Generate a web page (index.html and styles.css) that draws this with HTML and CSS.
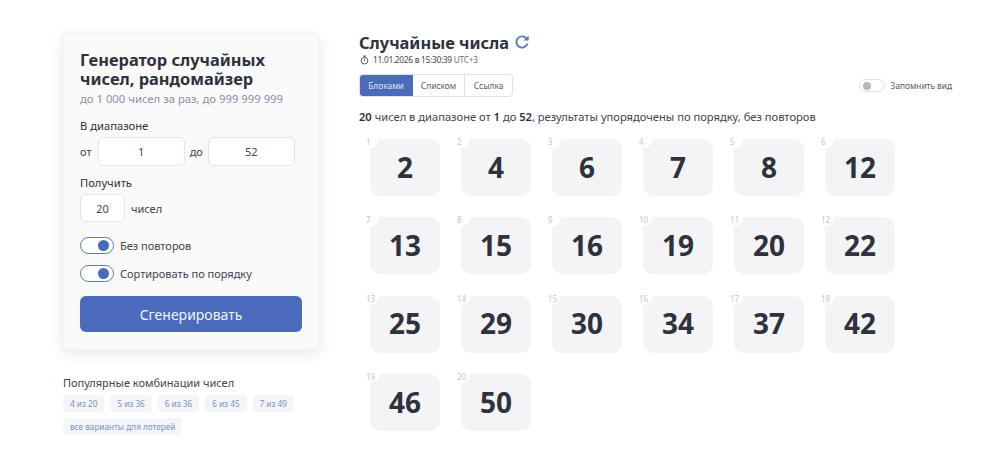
FILE: index.html
```html
<!DOCTYPE html>
<html lang="ru">
<head>
<meta charset="utf-8">
<title>Генератор случайных чисел</title>
<link rel="stylesheet" href="styles.css">
</head>
<body>
<div class="page">
  <aside class="side">
    <form class="card">
      <h1 class="card-title">Генератор случайных чисел, рандомайзер</h1>
      <p class="card-sub">до 1 000 чисел за раз, до 999 999 999</p>
      <div class="label label-range">В диапазоне</div>
      <div class="range-row">
        <span>от</span><div class="field field-wide">1</div>
        <span class="to">до</span><div class="field field-wide">52</div>
      </div>
      <div class="label label-get">Получить</div>
      <div class="get-row"><div class="field field-small">20</div><span>чисел</span></div>
      <div class="switch-row switch-first"><span class="switch"><i></i></span><span>Без повторов</span></div>
      <div class="switch-row"><span class="switch"><i></i></span><span>Сортировать по порядку</span></div>
      <div class="submit">Сгенерировать</div>
    </form>
    <div class="popular">
      <div class="popular-title">Популярные комбинации чисел</div>
      <div class="tags">
        <span class="tag">4 из 20</span><span class="tag">5 из 36</span><span class="tag">6 из 36</span><span class="tag">6 из 45</span><span class="tag">7 из 49</span><span class="tag">все варианты для лотерей</span>
      </div>
    </div>
  </aside>
  <main class="main">
    <div class="head"><h2 class="main-title">Случайные числа</h2>
      <svg class="refresh" viewBox="0 0 14 14" width="14" height="14"><path d="M11.2 3.2A5.6 5.6 0 1 0 12.4 8.6" fill="none" stroke="#5877c5" stroke-width="1.9"/><path d="M13.6 0.4V5.6H8.4Z" fill="#5877c5"/></svg>
    </div>
    <div class="date">
      <svg class="watch" viewBox="0 0 10 10" width="9" height="10"><circle cx="5" cy="5.8" r="3.7" fill="none" stroke="#3f444e" stroke-width="1"/><path d="M3.4 .6H6.6M5 .6V2M5 3.8V5.9" stroke="#3f444e" stroke-width="1" fill="none"/></svg>
      <span>11.01.2026 в 15:30:39 <span class="tz">UTC+3</span></span>
    </div>
    <div class="toolbar">
      <div class="tabs"><span class="tab tab-on tab-1">Блоками</span><span class="tab tab-2">Списком</span><span class="tab tab-3">Ссылка</span></div>
      <div class="remember"><span class="switch-off"><i></i></span><span>Запомнить вид</span></div>
    </div>
    <p class="summary"><b>20</b> чисел в диапазоне от <b>1</b> до <b>52</b>, результаты упорядочены по порядку, без повторов</p>
    <div class="grid">
      <div class="cell"><span class="idx">1</span><div class="tile">2</div></div>
      <div class="cell"><span class="idx">2</span><div class="tile">4</div></div>
      <div class="cell"><span class="idx">3</span><div class="tile">6</div></div>
      <div class="cell"><span class="idx">4</span><div class="tile">7</div></div>
      <div class="cell"><span class="idx">5</span><div class="tile">8</div></div>
      <div class="cell"><span class="idx">6</span><div class="tile">12</div></div>
      <div class="cell"><span class="idx">7</span><div class="tile">13</div></div>
      <div class="cell"><span class="idx">8</span><div class="tile">15</div></div>
      <div class="cell"><span class="idx">9</span><div class="tile">16</div></div>
      <div class="cell"><span class="idx">10</span><div class="tile">19</div></div>
      <div class="cell"><span class="idx">11</span><div class="tile">20</div></div>
      <div class="cell"><span class="idx">12</span><div class="tile">22</div></div>
      <div class="cell"><span class="idx">13</span><div class="tile">25</div></div>
      <div class="cell"><span class="idx">14</span><div class="tile">29</div></div>
      <div class="cell"><span class="idx">15</span><div class="tile">30</div></div>
      <div class="cell"><span class="idx">16</span><div class="tile">34</div></div>
      <div class="cell"><span class="idx">17</span><div class="tile">37</div></div>
      <div class="cell"><span class="idx">18</span><div class="tile">42</div></div>
      <div class="cell"><span class="idx">19</span><div class="tile">46</div></div>
      <div class="cell"><span class="idx">20</span><div class="tile">50</div></div>
    </div>
  </main>
</div>
</body>
</html>
```
FILE: styles.css
```css
* { box-sizing: border-box; }
html, body { margin: 0; height: 452px; overflow: hidden; background: #fff; }
body { font-family: "Noto Sans", "Open Sans", sans-serif; color: #2d323c; }
.page { display: flex; padding: 33px 48px 0 62px; gap: 39px; }
.side { width: 258px; flex: none; }
.card { height: 317px; padding: 16px 17px 0; background: #fafafb; border: 1px solid #f0f0f3; border-radius: 6px; box-shadow: 0 4px 14px rgba(40, 50, 80, .1); }
.card-title { margin: 0; font-size: 16.4px; line-height: 19px; font-weight: 700; color: #2d323c; }
.card-sub { margin: 3px 0 0; font-size: 11.3px; line-height: 16px; color: #8b90a5; }
.label { font-size: 11.2px; line-height: 16px; color: #2d323c; }
.label-range { margin-top: 11px; }
.label-get { margin-top: 9px; }
.range-row { display: flex; align-items: center; margin-top: 3px; font-size: 11px; color: #3f444e; }
.range-row span { width: 18px; flex: none; }
.range-row .to { width: 23.5px; text-align: center; }
.field { height: 29px; display: flex; align-items: center; justify-content: center; background: #fff; border: 1px solid #e4e5ea; border-radius: 5px; font-size: 11px; color: #3f444e; }
.field-wide { width: 86.5px; }
.field-small { width: 45px; height: 28px; }
.get-row { display: flex; align-items: center; gap: 6px; margin-top: 3px; font-size: 11px; color: #3f444e; }
.switch-row { display: flex; align-items: center; gap: 6px; margin-top: 11px; font-size: 11px; line-height: 17px; color: #3f444e; }
.switch-first { margin-top: 15px; }
.switch { width: 34px; height: 17px; display: flex; align-items: center; justify-content: flex-end; padding-right: 4px; border: 1px solid #5877c5; border-radius: 9px; background: #fff; }
.switch i { width: 11px; height: 11px; border-radius: 50%; background: #4a6abc; }
.submit { height: 36px; margin-top: 14px; display: flex; align-items: center; justify-content: center; background: #4a6abc; border-radius: 6px; color: #f2f4fb; font-size: 14px; }
.popular { margin-top: 26px; padding-left: 1px; }
.popular-title { font-size: 11px; line-height: 14px; color: #3f444e; }
.tags { display: flex; flex-wrap: wrap; gap: 6px; margin-top: 5px; }
.tag { height: 17px; padding: 0 7px; display: flex; align-items: center; background: #f4f5f8; border-radius: 4px; font-size: 8.2px; color: #7a90cf; }
.main { flex: 1; min-width: 0; }
.head { display: flex; align-items: flex-start; gap: 6px; }
.main-title { margin: 0; font-size: 16.4px; line-height: 20px; font-weight: 700; color: #2d323c; }
.refresh { margin-top: 2px; }
.date { display: flex; align-items: center; gap: 4px; margin-top: 1px; font-size: 8.4px; letter-spacing: -.3px; line-height: 12px; color: #3f444e; padding-left: 1px; }
.tz { color: #6c7080; }
.toolbar { display: flex; justify-content: space-between; align-items: center; margin-top: 8px; }
.tabs { display: flex; height: 23px; border: 1px solid #dfe1e7; border-radius: 4px; overflow: hidden; font-size: 8.4px; color: #555a66; }
.tab { display: flex; align-items: center; justify-content: center; border-right: 1px solid #dfe1e7; }
.tab-1 { width: 54px; margin: -1px 0 -1px -1px; }
.tab-2 { width: 52px; }
.tab-3 { width: 47px; border-right: 0; }
.tab-on { background: #4a6abc; color: #dfe5f5; border-right: 0; }
.remember { display: flex; align-items: center; gap: 6px; font-size: 8.3px; color: #555a66; }
.switch-off { width: 26px; height: 13px; display: flex; align-items: center; padding-left: 3px; border: 1px solid #dfe0e4; border-radius: 7px; }
.switch-off i { width: 8px; height: 8px; border-radius: 50%; background: #b5b6ba; }
.summary { margin: 12px 0 0; font-size: 11.15px; line-height: 16px; color: #3f444e; }
.summary b { font-weight: 600; color: #2d323c; }
.grid { display: grid; grid-template-columns: repeat(6, 70px); column-gap: 21px; row-gap: 21.4px; margin: 14px 0 0 11px; }
.cell { position: relative; height: 57px; }
.tile { height: 57px; padding-bottom: 2px; display: flex; align-items: center; justify-content: center; background: radial-gradient(circle at 0 0, #fff 9px, #f4f4f6 9.5px); border-radius: 10px; font-size: 28px; font-weight: 700; color: #2d323c; }
.idx { position: absolute; left: -4px; top: -2px; font-size: 8px; line-height: 10px; color: #c4c6ce; }
```
